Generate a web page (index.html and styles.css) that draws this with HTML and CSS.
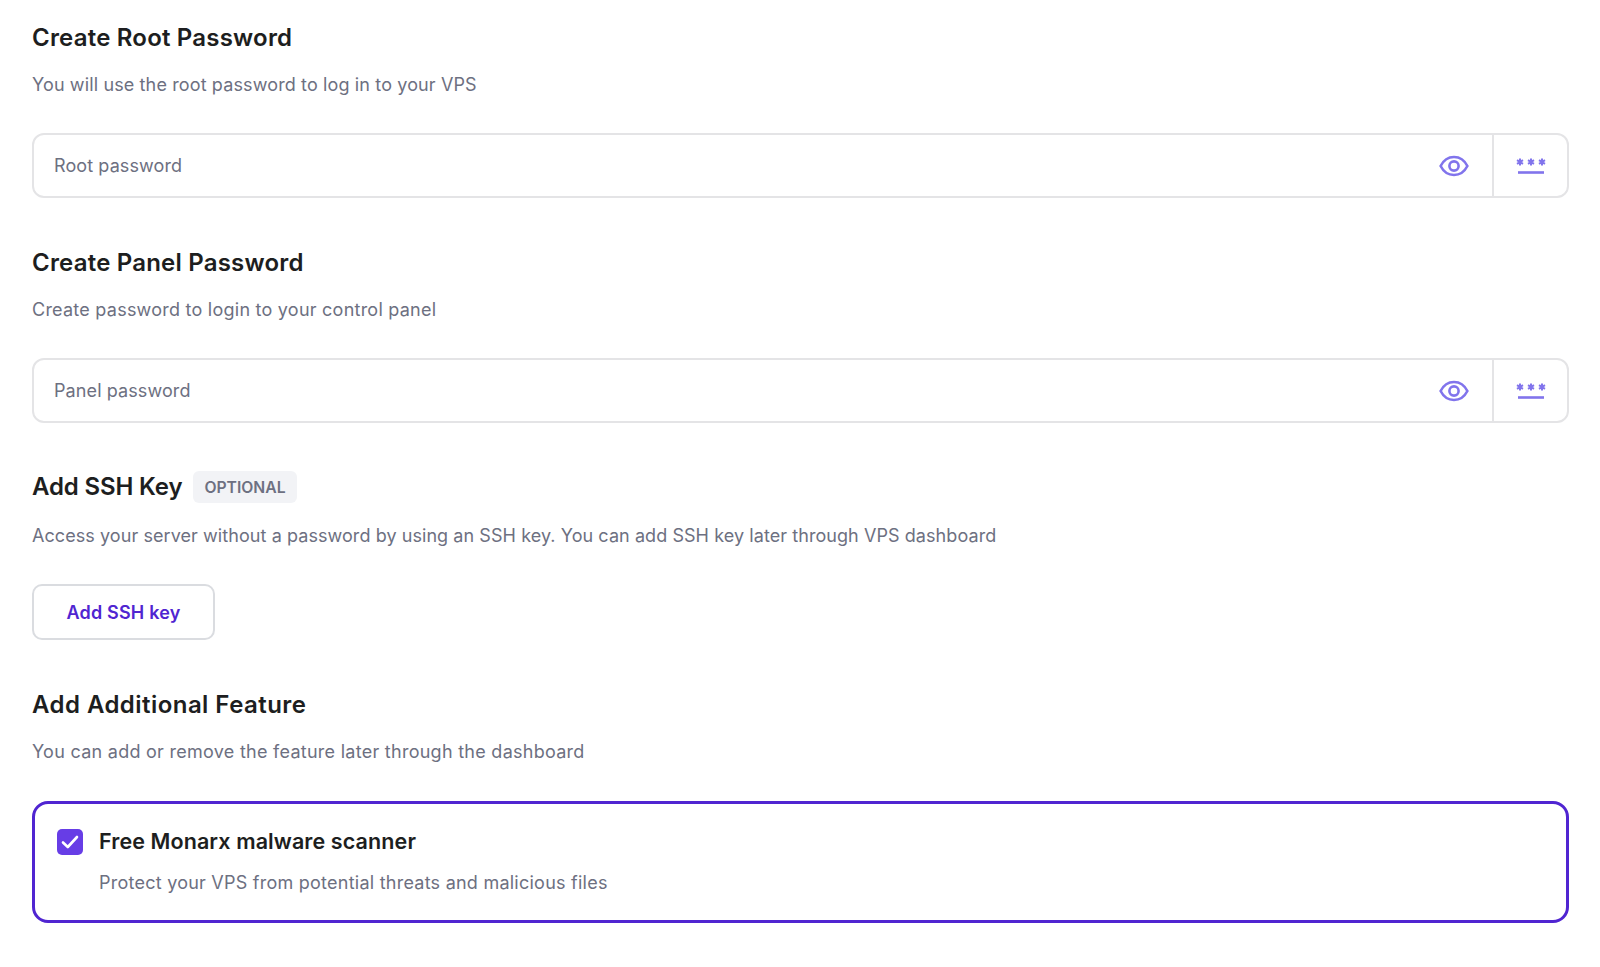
FILE: index.html
```html
<!DOCTYPE html>
<html lang="en">
<head>
<meta charset="utf-8">
<title>VPS setup</title>
<link rel="stylesheet" href="styles.css">
</head>
<body>
<main class="page">
  <section class="section">
    <h2 class="title">Create Root Password</h2>
    <p class="sub snug">You will use the root password to log in to your VPS</p>
    <div class="field">
      <span class="placeholder">Root password</span>
      <span class="eye"><svg width="30" height="30" viewBox="0 0 30 30" fill="none" stroke="#8174ec" stroke-width="2.600"><path d="M1.600 15C4.500 9.300 9.300 6 15 6S25.500 9.300 28.400 15C25.500 20.700 20.700 24 15 24S4.500 20.700 1.600 15Z"/><circle cx="15" cy="15" r="4.600"/></svg></span>
      <span class="gen"><svg width="30" height="18" viewBox="0 0 30 18" fill="none" stroke="#8174ec" stroke-width="2"><path d="M4 0.500V7.500M1 2.200 7 5.800M7 2.200 1 5.800"/><path d="M15 0.500V7.500M12 2.200 18 5.800M18 2.200 12 5.800"/><path d="M26 0.500V7.500M23 2.200 29 5.800M29 2.200 23 5.800"/><path d="M2 14.500H28" stroke-width="2.600"/></svg></span>
    </div>
  </section>
  <section class="section">
    <h2 class="title">Create Panel Password</h2>
    <p class="sub panel">Create password to login to your control panel</p>
    <div class="field">
      <span class="placeholder">Panel password</span>
      <span class="eye"><svg width="30" height="30" viewBox="0 0 30 30" fill="none" stroke="#8174ec" stroke-width="2.600"><path d="M1.600 15C4.500 9.300 9.300 6 15 6S25.500 9.300 28.400 15C25.500 20.700 20.700 24 15 24S4.500 20.700 1.600 15Z"/><circle cx="15" cy="15" r="4.600"/></svg></span>
      <span class="gen"><svg width="30" height="18" viewBox="0 0 30 18" fill="none" stroke="#8174ec" stroke-width="2"><path d="M4 0.500V7.500M1 2.200 7 5.800M7 2.200 1 5.800"/><path d="M15 0.500V7.500M12 2.200 18 5.800M18 2.200 12 5.800"/><path d="M26 0.500V7.500M23 2.200 29 5.800M29 2.200 23 5.800"/><path d="M2 14.500H28" stroke-width="2.600"/></svg></span>
    </div>
  </section>
  <section class="section">
    <div class="title-row">
      <h2 class="title short">Add SSH Key</h2>
      <span class="badge">OPTIONAL</span>
    </div>
    <p class="sub tight">Access your server without a password by using an SSH key. You can add SSH key later through VPS dashboard</p>
    <button class="btn" type="button">Add SSH key</button>
  </section>
  <section class="section">
    <h2 class="title wide">Add Additional Feature</h2>
    <p class="sub">You can add or remove the feature later through the dashboard</p>
    <div class="card">
      <div class="card-head">
        <span class="check"><svg width="22" height="22" viewBox="0 0 22 22" fill="none" stroke="#fff" stroke-width="2.600" stroke-linecap="round" stroke-linejoin="round"><path d="M4 11.500 8.800 16 18 6"/></svg></span>
        <span class="card-title">Free Monarx malware scanner</span>
      </div>
      <p class="card-sub">Protect your VPS from potential threats and malicious files</p>
    </div>
  </section>
</main>
</body>
</html>
```
FILE: styles.css
```css
* { box-sizing: border-box; }
html, body { margin: 0; padding: 0; background: #fff; }
body { font-family: Inter, "Noto Sans", sans-serif; color: #1d1e20; }
.page { width: 1600px; height: 967px; padding: 23px 31px 0 32px; overflow: hidden; display: flex; flex-direction: column; }
.section { display: flex; flex-direction: column; align-items: stretch; }
.title { margin: 0; font-size: 24px; line-height: 30px; font-weight: 600; letter-spacing: 0.2px; }
.title.short { letter-spacing: -0.15px; }
.title.wide { letter-spacing: 0.45px; }
.sub { margin: 20px 0 0; font-size: 18px; line-height: 24px; color: #6d7081; letter-spacing: 0.27px; }
.sub.snug { letter-spacing: 0.13px; }
.sub.panel { letter-spacing: 0.24px; }
.sub.tight { letter-spacing: 0.07px; margin-top: 22px; }
.field { margin-top: 36px; height: 65px; border: 2px solid #e4e4e6; border-radius: 12px; display: flex; align-items: center; margin-bottom: 50px; }
.placeholder { flex: 1; padding-left: 20px; font-size: 18px; color: #6d7081; letter-spacing: 0.1px; }
.eye { display: flex; width: 30px; margin-right: 23px; }
.gen { width: 75px; height: 100%; border-left: 2px solid #e4e4e6; display: flex; align-items: center; justify-content: center; padding-top: 2px; }
.title-row { display: flex; align-items: center; gap: 11px; height: 30px; margin-top: -1px; }
.badge { height: 32px; padding: 0 11px; display: flex; align-items: center; background: #f2f3f6; border-radius: 6px; font-size: 15.700px; font-weight: 600; color: #6d7081; }
.btn { align-self: flex-start; margin-top: 36px; margin-bottom: 50px; width: 183px; height: 56px; background: #fff; border: 2px solid #dadce0; border-radius: 10px; font: 600 18px Inter, sans-serif; letter-spacing: 0.2px; color: #5025d1; }
.card { margin-top: 37px; height: 122px; border: 3px solid #5025d1; border-radius: 16px; padding: 25px 22px; }
.card-head { display: flex; align-items: center; gap: 16px; }
.check { width: 26px; height: 26px; border-radius: 5px; background: #673de6; display: flex; align-items: center; justify-content: center; }
.card-title { font-size: 21.500px; font-weight: 600; line-height: 24px; margin-bottom: 2px; letter-spacing: 0.1px; }
.card-sub { margin: 16px 0 0 42px; font-size: 18px; line-height: 24px; color: #6d7081; letter-spacing: 0.24px; }
```
